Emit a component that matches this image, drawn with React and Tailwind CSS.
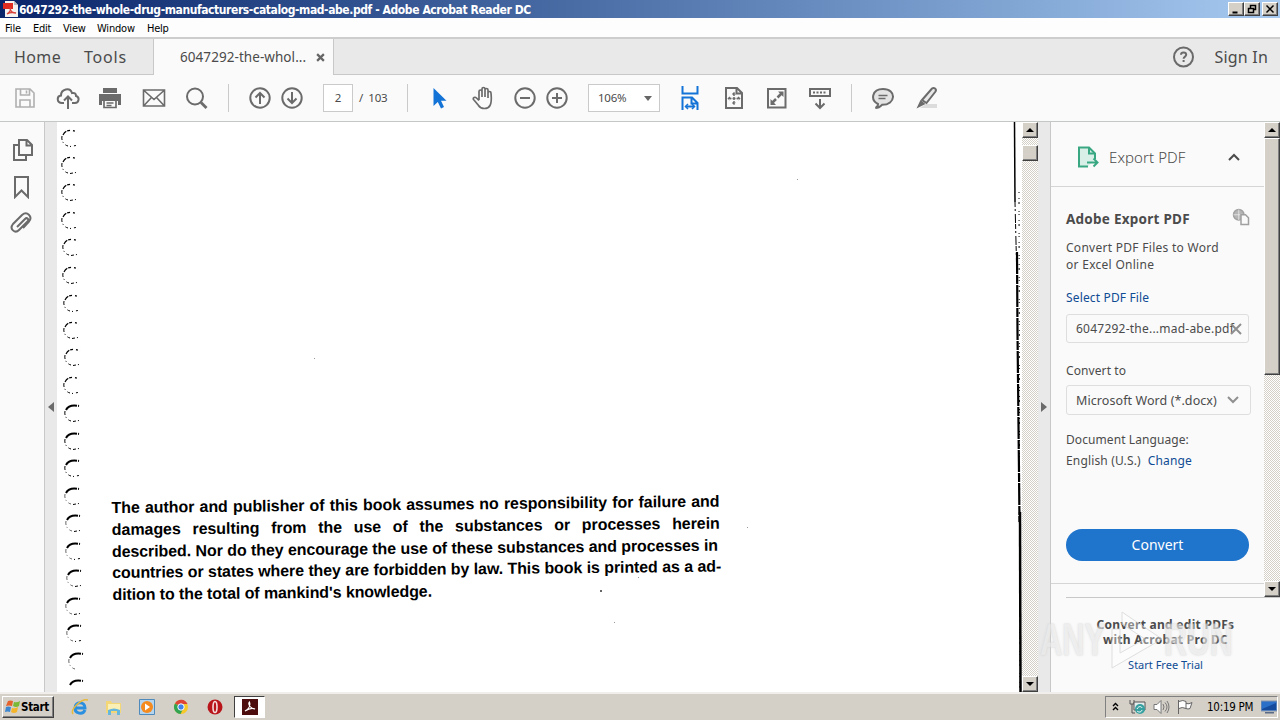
import clsx from 'clsx';

const ui = "font-['DejaVu_Sans_Condensed','DejaVu_Sans',sans-serif]";

const Icon = ({ className, children, size = 24 }) => (
  <svg
    width={size}
    height={size}
    viewBox="0 0 24 24"
    fill="none"
    stroke="currentColor"
    strokeWidth="2"
    className={clsx('shrink-0', className)}
  >
    {children}
  </svg>
);

const Divider = ({ className }) => <span className={clsx('w-px h-7 bg-[#cacaca] shrink-0', className)} />;

const bevel = 'bg-[#d4d0c8] border border-t-white border-l-white border-r-[#404040] border-b-[#404040] shadow-[inset_-1px_-1px_0_#808080]';

const WindowButton = ({ children, className }) => (
  <span className={clsx(bevel, 'w-4 h-[14px] flex items-center justify-center', className)}>
    <svg width="10" height="10" viewBox="0 0 10 10" fill="none" stroke="#000" strokeWidth="1.5">{children}</svg>
  </span>
);

const TitleBar = () => (
  <div className="h-[18px] shrink-0 flex items-center pl-[3px] pr-[2px] bg-linear-to-r from-[#0a246a] to-[#a6caf0]">
    <svg width="16" height="16" viewBox="0 0 16 16" className="shrink-0">
      <path d="M2 0h9l4 4v12H2z" fill="#f4f1f1" />
      <path d="M11 0v4h4z" fill="#bbb" />
      <path d="M0 2h10v6H0z" fill="#e02b20" />
      <path d="M4 13c3-2 4-5 3-7M7 8c1 3 3 4 6 4M4 13c3-2 5-2 9-1" stroke="#d8423a" strokeWidth="1.3" fill="none" />
    </svg>
    <span className={clsx(ui, 'pt-px text-white font-bold text-[12px] leading-[18px] whitespace-nowrap tracking-[-0.415px]')}>
      6047292-the-whole-drug-manufacturers-catalog-mad-abe.pdf - Adobe Acrobat Reader DC
    </span>
    <div className="ml-auto flex">
      <WindowButton><path d="M1.500 8.500h5" strokeWidth="2" /></WindowButton>
      <WindowButton><path d="M3.500 4V1.500h5v4H7M1.500 4.500h5v4h-5z" /></WindowButton>
      <WindowButton className="ml-[2px]"><path d="M1.500 1.500l7 7M8.500 1.500l-7 7" /></WindowButton>
    </div>
  </div>
);

const MenuBar = () => (
  <div className={clsx(ui, 'h-[19px] shrink-0 flex items-center pl-[5px] pt-[3px] bg-[#fdfdfd] text-black text-[11px]')}>
    <span className="w-7 tracking-[-0.1px]">File</span>
    <span className="w-[30px] tracking-[-0.3px]">Edit</span>
    <span className="w-[34px] tracking-[-0.2px]">View</span>
    <span className="w-[50px] tracking-[-0.2px]">Window</span>
    <span className="tracking-[-0.3px]">Help</span>
  </div>
);

const TabBar = () => (
  <div className="h-[38px] shrink-0 flex border-t-2 border-t-[#cdcdcd] bg-[#e9e9e9] text-[#4b4b4b] font-['Noto_Sans',sans-serif]">
    <div className="w-[154px] flex items-center pl-[14px] border-b border-r border-[#c8c8c8] text-[16px]">
      <span className="w-[70px] tracking-[0.4px]">Home</span>
      <span className="tracking-[0.8px]">Tools</span>
    </div>
    <div className="w-[179px] flex items-center pl-[26px] bg-[#fafafa] text-[13.500px] whitespace-nowrap">
      <span className="w-[136px] tracking-[0.060px]">6047292-the-whol...</span>
      <svg width="9" height="9" viewBox="0 0 8 8" stroke="#666" strokeWidth="2"><path d="M1 1l6 6M7 1L1 7" /></svg>
    </div>
    <div className="flex-1 flex items-center justify-end pr-[12px] border-b border-l border-[#c8c8c8] text-[16px]">
      <Icon className="text-[#6a6a6a] mr-[18px]">
        <circle cx="11.500" cy="12" r="9.500" />
        <path d="M9 9.800c0-3.200 5.200-3.200 5.200 0 0 1.900-2.600 1.700-2.600 4M11.600 15v2" />
      </Icon>
      <span className="tracking-[0.200px]">Sign In</span>
    </div>
  </div>
);

const Toolbar = () => (
  <div className="h-[47px] shrink-0 flex items-center pl-[13px] border-b border-[#c4c8c4] bg-[#fafafa] text-[#6b6b6b] font-['Noto_Sans',sans-serif] text-[12px]">
    <Icon className="text-[#b0b0b0]">
      <path d="M3 3h14l4 4v14H3zM7.500 3v6h9V3M7 21v-7h10v7M13.500 4.500v3" strokeWidth="1.600" />
    </Icon>
    <Icon className="ml-[19px]">
      <path d="M8 17H6c-5.500 0-5.500-7-1-7.500C5 3 14 1 16 7c3-.5 4 1 4 3 4 1 3 7-1 7h-3M12 23V11M8 14.500l4-4 4 4" />
    </Icon>
    <Icon className="ml-[18px]">
      <path d="M5 2h14v5H5z" fill="currentColor" stroke="none" />
      <path d="M1 8h22v11h-3v-4H4v4H1z" fill="currentColor" stroke="none" />
      <path d="M6 14v7.500h12V14zM8.500 17h7M8.500 19.500h5" strokeWidth="1.700" />
    </Icon>
    <Icon className="ml-[20px]">
      <path d="M1.500 4h21v16h-21zM2 4.500l10 9 10-9M2 19.500l7.500-8M22 19.500l-7.500-8" strokeWidth="1.600" />
    </Icon>
    <Icon className="ml-[19px]">
      <circle cx="10" cy="10.500" r="8" />
      <path d="M16 16.500l5.500 5.500" strokeWidth="2.800" />
    </Icon>
    <Divider className="ml-[19px]" />
    <Icon className="ml-[19px]">
      <circle cx="12" cy="12" r="9.700" />
      <path d="M12 18V7M7.500 11.500L12 7l4.500 4.500" />
    </Icon>
    <Icon className="ml-[8px]">
      <circle cx="12" cy="12" r="9.700" />
      <path d="M12 6v11M7.500 12.500L12 17l4.500-4.500" />
    </Icon>
    <div className="ml-[19px] w-[30px] h-7 border border-[#cacaca] bg-white flex items-center justify-center text-[#4b4b4b] text-[11.500px]">2</div>
    <span className="ml-[6px] w-[48px] text-[#4b4b4b] whitespace-nowrap text-[11.500px] tracking-[-0.300px]">/&nbsp; 103</span>
    <Divider />
    <Icon className="ml-[19px]">
      <path d="M6.500 2v18l4.300-4 3.200 6.500 3-1.500-3-6.200h5.500z" fill="#1473d6" stroke="none" />
    </Icon>
    <Icon className="ml-[20px]">
      <path d="M8 14V5.500c0-2 3-2 3 0V11 3c0-2 3-2 3 0v8-7c0-2 3-2 3 0v8-5c0-2 3-2 3 0 .5 6 1 9-1 12.500-2 4-9 4-11.500 0C5.500 17 4 15 2.500 13.500c-1-2 1.500-3 3-1.500L8 14.500" strokeWidth="1.700" />
    </Icon>
    <Icon className="ml-[18px]">
      <circle cx="12" cy="12" r="9.700" />
      <path d="M7 12h10" />
    </Icon>
    <Icon className="ml-[8px]">
      <circle cx="12" cy="12" r="9.700" />
      <path d="M7 12h10M12 7v10" />
    </Icon>
    <div className="ml-[19px] w-[72px] h-7 border border-[#cacaca] bg-white flex items-center justify-between pl-[9px] pr-[7px] text-[#4b4b4b] text-[11.500px]">
      <span className="tracking-[-0.250px]">106%</span>
      <svg width="8" height="5" viewBox="0 0 8 5"><path d="M0 0h8L4 5z" fill="#666" /></svg>
    </div>
    <Icon className="ml-[18px] text-[#1473d6]">
      <path d="M4.500 0v7.500h15V0M4.500 24V11.500h9.500l5.500 5.500V24M13.500 11.500V17.500h6M8 20.500h8" />
      <path d="M10 18l-2.500 2.500L10 23M14 18l2.500 2.500L14 23" strokeWidth="1.500" />
    </Icon>
    <Icon className="ml-[20px]">
      <path d="M4 2h11l5 5v15H4zM14.500 2v5.500H20" strokeWidth="2" />
      <path d="M12 7v11M6.500 12.500h11M10.500 8.500L12 7l1.500 1.500M10.500 16.500L12 18l1.500-1.500M8 11l-1.500 1.500L8 14M16 11l1.500 1.500L16 14" strokeWidth="1.500" strokeDasharray="3 1" />
    </Icon>
    <Icon className="ml-[19px]">
      <path d="M3 3h17.500v18.500H3z" />
      <path d="M13 5.500h5.500V11zM5.500 13v6H11z" fill="currentColor" stroke="none" />
      <path d="M12.500 11.500l4-4M11 13l-4 4" strokeWidth="2.500" />
    </Icon>
    <Icon className="ml-[19px]">
      <path d="M2 3h20v7H2zM12 13v9M7.500 17.500L12 22l4.500-4.500" />
      <path d="M5 6.500h14" strokeDasharray="2 1.500" />
    </Icon>
    <Divider className="ml-[19px]" />
    <Icon className="ml-[19px]">
      <path d="M4.500 22c2-1 2.500-2.500 2.500-4C-1 14 1 3 12 3c14 0 13 16-1 15.800C9 21 7 22 4.500 22z" fill="#e4e4e4" />
      <path d="M7.500 9.500h9M7.500 12.500h7" strokeWidth="1.600" />
    </Icon>
    <Icon className="ml-[19px]">
      <path d="M12 18h11v4H6z" fill="#dcdcdc" stroke="none" />
      <path d="M8 14L18 2.500c2-1.500 5 .5 3.500 3L12.500 17z" fill="#e8e8e8" />
      <path d="M6.500 14l5 4-4 2-5 2.500z" fill="currentColor" stroke="none" />
    </Icon>
  </div>
);

// y centre and x offset of every hole down the bound edge
const holes = [
  [16, 5], [43, 5], [70, 5], [98, 5], [125, 6], [153, 6], [181, 7], [208, 7], [235, 8], [263, 7], [291, 8],
  [319, 8], [346, 8], [374, 8], [401, 9], [429, 9], [456, 10], [484, 9], [511, 10], [539, 12], [566, 12],
];

const ScanMarks = () => (
  <svg width="965" height="570" viewBox="0 0 965 570" className="absolute left-0 top-0" fill="none" stroke="#000">
    {holes.map(([y, x], i) => (
      <g key={y} transform={`translate(${x} ${y})`}>
        <path
          d={i > 9 ? 'M1-3C3-7 6-8.500 14-7' : 'M1-3C3-7 7-9.500 15-6'}
          strokeWidth={i > 9 ? 2 : 1.200}
          strokeDasharray={i > 9 ? '13 1 3' : '5 1 3 3 2 2'}
        />
        {i < 20 && <path d="M0-2C-1 3 2 7 6 8" strokeWidth="1" strokeDasharray="4 2 1 3" opacity={i > 12 ? 0.6 : 1} />}
        {i < 19 && <path d="M8 8.500l6-1" strokeDasharray={i % 3 ? '3 2 1' : '1 3 2'} />}
      </g>
    ))}
    <path d="M957.500 0L958 80" strokeWidth="1.500" />
    <path d="M958 80L960 160" strokeWidth="1" strokeDasharray="5 2 2 3 9 1" />
    <path d="M960 130L960.500 210L962 350L962.500 400" strokeWidth="2.200" strokeDasharray="22 1 9 1" />
    <path d="M963 390L963.500 570" strokeWidth="2.500" />
    <path d="M962 70L963 570" strokeWidth="1" strokeDasharray="1 5 1 3 2 7 1 2" />
    <g fill="#333" stroke="none">
      <circle cx="544" cy="469" r="1" />
      <path d="M257 236h1v1h-1zM740 57h1v1h-1zM690 405h1v1h-1zM557 500h1v1h-1zM581 455h1v1h-1z" opacity=".5" />
    </g>
  </svg>
);

const lines = [
  { text: 'The author and publisher of this book assumes no responsibility for failure and', size: 'w-[608px] tracking-[-0.060px]' },
  { text: 'damages resulting from the use of the substances or processes herein', size: 'w-[608px] tracking-[-0.060px]' },
  { text: 'described. Nor do they encourage the use of these substances and processes in', size: 'w-[606px] tracking-[-0.100px]' },
  { text: 'countries or states where they are forbidden by law. This book is printed as a ad-', size: 'w-[609px] tracking-[-0.100px]' },
  { text: "dition to the total of mankind's knowledge.", size: 'w-[319px] tracking-[-0.100px]' },
];

const DocumentPage = () => (
  <div className="relative w-[965px] shrink-0 bg-white overflow-hidden pt-[375px] pl-[55px]">
    <ScanMarks />
    <div className="w-[610px] origin-left -rotate-[0.600deg] font-['Liberation_Sans',sans-serif] font-bold text-[16px] leading-[21.800px] text-black">
      {lines.map((line) => (
        <p key={line.text} className={clsx('whitespace-nowrap [text-align-last:justify]', line.size)}>{line.text}</p>
      ))}
    </div>
  </div>
);

const ScrollButton = ({ down }) => (
  <span className={clsx(bevel, 'w-4 h-4 shrink-0 flex items-center justify-center')}>
    <svg width="8" height="4" viewBox="0 0 8 4"><path d={down ? 'M0 0h8L4 4z' : 'M0 4h8L4 0z'} fill="#000" /></svg>
  </span>
);

const ScrollBar = ({ className, thumb }) => (
  <div className={clsx('w-4 shrink-0 flex flex-col bg-[repeating-conic-gradient(#fff_0_25%,#d4d0c8_0_50%)] bg-[length:2px_2px]', className)}>
    <ScrollButton />
    <span className={clsx(bevel, thumb)} />
    <span className="flex-1" />
    <ScrollButton down />
  </div>
);

const SideRail = () => (
  <div className="w-[45px] shrink-0 flex flex-col items-center pt-4 border-r border-[#c8c8c8] bg-[#fafafa] text-[#6b6b6b]">
    <Icon>
      <path d="M9 2h8l5 5v10H9zM16.500 2v5.500H22" />
      <path d="M8 7H4v15h12v-5" />
    </Icon>
    <Icon className="mt-[13px]"><path d="M5 2h13v20l-6.500-6.500L5 22z" /></Icon>
    <Icon className="mt-[12px]">
      <path d="M8 16l8-8c2-2 4.500.5 2.500 2.500L10 19c-4 4-10-1-6-6l9-9c5-4.500 11 1.500 7 6.500L14 17" transform="translate(-1 0)" />
    </Icon>
  </div>
);

const ExportPanel = () => (
  <div className="w-[230px] shrink-0 flex flex-col border-l border-[#c8c8c8] bg-[#fafafa] text-[#4b4b4b] font-['Noto_Sans',sans-serif] text-[12px]">
    <div className="flex h-[475px]">
      <div className="flex-1 border-b border-[#d5d5d5] h-[462px]">
        <div className="h-[65px] flex items-center pl-[25px] pt-[6px] border-b border-[#d5d5d5]">
          <Icon className="text-[#3aa783]">
            <path d="M12 21.500H3V2.500h10l6 6V14" fill="#d8efe8" />
            <path d="M13 3v5.500h5.500M11 17.500h10M17.500 13.500l4 4-4 4" />
          </Icon>
          <span className="ml-[9px] w-[110px] text-[15px] font-light tracking-[0.080px]">Export PDF</span>
          <svg width="14" height="10" viewBox="0 0 14 10" className="ml-[8px]" fill="none" stroke="#4b4b4b" strokeWidth="2"><path d="M2 8l5-5 5 5" /></svg>
        </div>
        <div className="pl-[15px] flex flex-col">
          <div className="mt-[20px] h-6 flex items-center">
            <span className="w-[166px] font-bold text-[13.500px] tracking-[0.250px] whitespace-nowrap">Adobe Export PDF</span>
            <Icon size={18} className="text-[#a0a0a0] mb-1">
              <circle cx="9" cy="9" r="7" fill="#b5b5b5" />
              <path d="M2 9h14M9 2v14" stroke="#eee" strokeWidth="1" />
              <path d="M12 9h6l4 4v9H12z" fill="#fafafa" />
            </Icon>
          </div>
          <p className="mt-[8px] leading-[17px] tracking-[0.280px] whitespace-nowrap">Convert PDF Files to Word<br />or Excel Online</p>
          <span className="mt-[16px] leading-[17px] tracking-[0.150px] text-[#0f4c94]">Select PDF File</span>
          <div className="mt-[8px] w-[183px] h-[29px] flex items-center justify-between pl-[9px] pr-[6px] border border-[#dedede] rounded-[3px] whitespace-nowrap">
            <span className="w-[154px] tracking-[0.230px]">6047292-the...mad-abe.pdf</span>
            <svg width="12" height="12" viewBox="0 0 12 12" className="shrink-0" stroke="#8e8e8e" strokeWidth="2"><path d="M1 1l10 10M11 1L1 11" /></svg>
          </div>
          <span className="mt-[19px] leading-[17px] tracking-[0.100px]">Convert to</span>
          <div className="mt-[6px] w-[185px] h-[30px] flex items-center justify-between pl-[9px] pr-[11px] border border-[#dedede] rounded-[3px] whitespace-nowrap">
            <span className="pt-[3px] text-[12.500px] tracking-[0.080px]">Microsoft Word (*.docx)</span>
            <svg width="12" height="8" viewBox="0 0 12 8" fill="none" stroke="#909090" strokeWidth="2"><path d="M1 1l5 5 5-5" /></svg>
          </div>
          <span className="mt-[16px] leading-[17px] tracking-[0.080px]">Document Language:</span>
          <div className="mt-[4px] leading-[17px] flex gap-[7px] tracking-[0.150px]">
            <span>English (U.S.)</span>
            <span className="text-[#0f4c94]">Change</span>
          </div>
          <div className="mt-[60px] w-[183px] h-8 pb-px rounded-full bg-[#1f74cb] text-white text-[14px] flex items-center justify-center">Convert</div>
        </div>
      </div>
      <ScrollBar thumb="h-[237px]" />
    </div>
    <div className="ml-[15px] border-t border-[#c8c8c8] flex flex-col items-center pr-[15px] pt-[19px] text-center">
      <p className="font-bold text-[12px] leading-[15px] tracking-[0.280px] whitespace-nowrap">Convert and edit PDFs<br />with Acrobat Pro DC</p>
      <span className="mt-[10px] text-[11px] leading-[16px] text-[#0f4c94]">Start Free Trial</span>
    </div>
  </div>
);

const Watermark = () => (
  <div className="absolute left-[1040px] top-[608px] w-[194px] h-[64px] flex items-center justify-between opacity-70 font-['Liberation_Sans',sans-serif] font-bold text-[44px] text-white/50 [text-shadow:0_0_3px_#cfcfcf] [-webkit-text-stroke:0.5px_#dcdcdc]">
    <span className="w-[68px] origin-left scale-x-[0.700]">ANY</span>
    <svg width="56" height="62" viewBox="0 0 56 62" className="shrink-0" fill="none" stroke="#d4d4d4">
      <path d="M14 3l40 27L4 59V20h8v24l25-14-23-15z" fill="#fff" fillOpacity=".5" />
    </svg>
    <span className="w-[70px] origin-left scale-x-[0.720]">RUN</span>
  </div>
);

const TaskBar = () => (
  <div className={clsx(ui, 'h-7 shrink-0 flex items-center pl-[2px] pr-[2px] bg-[#d4d0c8] border-t-2 border-t-[#f0efeb] text-black text-[11px]')}>
    <div className={clsx(bevel, 'w-[52px] h-[22px] flex items-center pl-[2px] font-bold text-[11.500px] tracking-[-0.300px]')}>
      <svg width="16" height="16" viewBox="0 0 16 16" className="shrink-0">
        <path d="M3 2q2-1 5 0L7 7q-3-1-6 0z" fill="#e5622c" />
        <path d="M9 3q3 1 6-1l-1 5q-3 2-6 0z" fill="#7ab837" />
        <path d="M1 8q2-1 5 0l-1 5q-2-1-5 0z" fill="#3d87d0" />
        <path d="M7 9q3 1 6-1l-1 5q-3 2-6 0z" fill="#f5b52b" />
      </svg>
      <span className="pt-px">Start</span>
    </div>
    <svg width="18" height="18" viewBox="0 0 18 18" className="ml-[17px]" fill="none">
      <path d="M14 12c-2 5-10 4-10-2 0-7 10-7 10 0H5" stroke="#2b8fe0" strokeWidth="3" />
      <path d="M2 16C-1 12 10 0 17 2" stroke="#e8b93a" strokeWidth="1.500" />
    </svg>
    <svg width="18" height="18" viewBox="0 0 18 18" className="ml-[16px]">
      <path d="M1 3h5l1 2h9v10H1z" fill="#f3d675" />
      <path d="M3 6h12v6H3z" fill="#faf0b5" />
      <path d="M3 17v-5q6-3 12 0v5h-3v-4H6v4z" fill="#67b7dc" />
    </svg>
    <svg width="16" height="16" viewBox="0 0 16 16" className="ml-[16px]">
      <path d="M.5.500h15v15H.5z" fill="#b5d5ef" stroke="#4e8abc" />
      <circle cx="8" cy="8" r="6" fill="#f58b1f" />
      <path d="M6 4.500l5 3.500-5 3.500z" fill="#fff" />
    </svg>
    <svg width="16" height="16" viewBox="0 0 16 16" className="ml-[18px]">
      <circle cx="8" cy="8" r="7" fill="#f6c829" />
      <path d="M8 8L2 4.400A7 7 0 0 1 14.500 5H8z" fill="#dd4435" />
      <path d="M8 8L1.900 4.500A7 7 0 0 0 7.500 15L10 10z" fill="#32a350" />
      <circle cx="8" cy="8" r="3.200" fill="#3e82ea" stroke="#fff" />
    </svg>
    <svg width="16" height="16" viewBox="0 0 16 16" className="ml-[18px]">
      <circle cx="8" cy="8" r="7.500" fill="#b9161c" />
      <ellipse cx="8" cy="8" rx="2" ry="5.500" fill="#b9161c" stroke="#f5dede" strokeWidth="1.600" />
    </svg>
    <div className="ml-[11px] w-[31px] h-[22px] flex items-center justify-center bg-white border border-t-[#404040] border-l-[#404040] border-white">
      <svg width="16" height="16" viewBox="0 0 16 16">
        <path d="M0 0h16v16H0z" fill="#4c0d0c" />
        <path d="M3 12c4-2 6-6 4.500-9-2 2 1 7 5.500 7-3-1.500-7 0-10 2z" fill="none" stroke="#fff" strokeWidth="1.100" />
      </svg>
    </div>
    <div className="ml-auto w-[173px] h-[22px] flex items-center pl-[6px] border border-t-[#808080] border-l-[#808080] border-white">
      <svg width="7" height="9" viewBox="0 0 7 9" className="mb-[2px]" fill="none" stroke="#000" strokeWidth="1.400"><path d="M1 4l2.500-2.500L6 4M1 8l2.500-2.500L6 8" /></svg>
      <svg width="17" height="16" viewBox="0 0 17 16" className="ml-[10px]" fill="none" stroke="#555">
        <path d="M1 1v4h4V1M3 5v9h3" />
        <path d="M5 3h11v8H5z" fill="#e4ecec" />
        <circle cx="11" cy="10" r="5" fill="#36a0a0" stroke="none" />
        <path d="M8 10c2-4 5-2 5-1M13 11c-1 3-4 2-5 1" stroke="#fff" />
      </svg>
      <svg width="17" height="16" viewBox="0 0 17 16" className="ml-[7px]" fill="#fff" stroke="#777">
        <path d="M1 5.500h3l4-4v13l-4-4H1z" />
        <path d="M10 5q2 3 0 6M12 3.500q4 4.500 0 9M14 2q4 6 0 12" fill="none" />
      </svg>
      <svg width="17" height="16" viewBox="0 0 17 16" className="ml-[7px]" fill="#fff" stroke="#666">
        <path d="M1.500 1v14M2 2.500q4-2 7 0v7q-4-2-7 0M9 4.500q3 1 6-1l-2 6q-2 1-4 0" />
      </svg>
      <span className="ml-[13px] w-[48px] pt-px whitespace-nowrap text-[11.500px] tracking-[-0.250px]">10:19 PM</span>
      <svg width="16" height="16" viewBox="0 0 16 16" className="ml-[6px]">
        <path d="M0 2h16v10H0z" fill="#2c6fc9" stroke="#8795aa" />
        <path d="M1 10L15 4v7H1z" fill="#164a9d" />
        <path d="M4 13h9v1.500H4z" fill="#596b86" />
      </svg>
    </div>
  </div>
);

export default function App() {
  return (
    <div className="relative w-[1280px] h-[720px] flex flex-col overflow-hidden bg-[#fafafa]">
      <TitleBar />
      <MenuBar />
      <TabBar />
      <Toolbar />
      <div className="h-[570px] shrink-0 flex">
        <SideRail />
        <div className="w-3 shrink-0 flex items-center justify-end bg-[#e9e9e9]">
          <svg width="6" height="10" viewBox="0 0 6 10" className="mr-[3px]"><path d="M6 0v10L0 5z" fill="#6b6b6b" /></svg>
        </div>
        <DocumentPage />
        <ScrollBar thumb="mt-[7px] h-4" />
        <div className="w-3 shrink-0 flex items-center bg-[#e9e9e9]">
          <svg width="6" height="10" viewBox="0 0 6 10" className="ml-[3px]"><path d="M0 0v10l6-5z" fill="#6b6b6b" /></svg>
        </div>
        <ExportPanel />
      </div>
      <TaskBar />
      <Watermark />
    </div>
  );
}
